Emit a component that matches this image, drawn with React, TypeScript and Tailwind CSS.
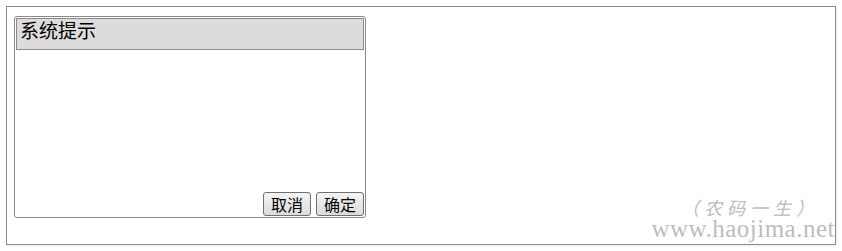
export default function App() {
  const cjk = { fontFamily: '"Microsoft YaHei", "Noto Sans CJK SC", "Noto Sans", sans-serif' };
  return (
    <div className="w-[842px] h-[251px] bg-white pt-[6px] pl-[6px]" style={cjk}>
      <div className="relative w-[830px] h-[239px] border border-[#8a8a8a] shadow-[1px_1px_2px_rgba(0,0,0,0.08)] pt-[9px] pl-[7px]">
        <div className="flex flex-col w-[352px] h-[202px] border border-[#8a8a8a] rounded-[3px] p-[1px]">
          <div className="h-[32px] border border-[#8a8a8a] bg-[#dddbdc] px-[3px] text-[19px] leading-[22px] text-black">
            系统提示
          </div>
          <div className="flex-1" />
          <div className="flex justify-end gap-[5px]">
            <button className="h-[24px] w-[48px] border border-[#707070] rounded-[3px] bg-linear-to-b from-[#f4f4f4] to-[#dcdcdc] text-[16px] leading-[20px] text-black">
              取消
            </button>
            <button className="h-[24px] w-[48px] border border-[#707070] rounded-[3px] bg-linear-to-b from-[#f4f4f4] to-[#dcdcdc] text-[16px] leading-[20px] text-black">
              确定
            </button>
          </div>
        </div>
        <div className="absolute right-[0px] bottom-[5px] flex flex-col items-end gap-[4px] text-[#bdbdbd]">
          <div
            className="mr-[16px] text-[18px] leading-[16px] italic tracking-[5px]"
            style={{ fontFamily: '"Noto Sans CJK SC", sans-serif' }}
          >
            （农码一生）
          </div>
          <div
            className="text-[25px] leading-[20px] tracking-[0.5px]"
            style={{ fontFamily: '"Liberation Serif", serif' }}
          >
            www.haojima.net
          </div>
        </div>
      </div>
    </div>
  );
}
